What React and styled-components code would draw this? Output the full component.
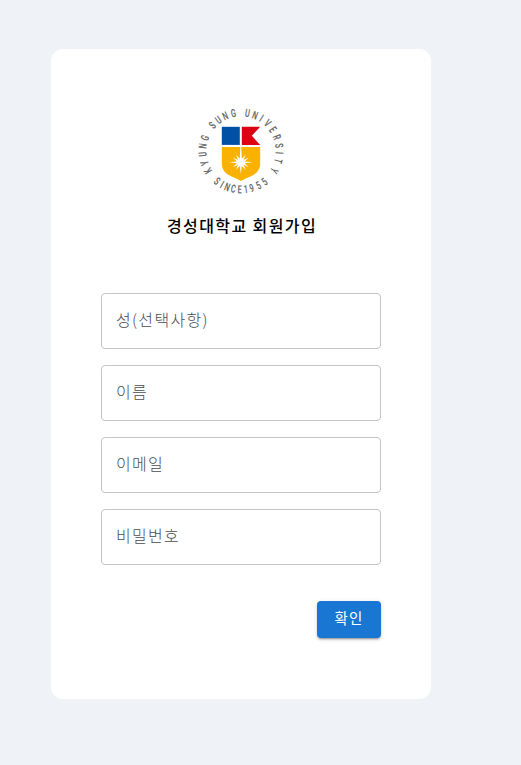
import React from "react";
import styled, { createGlobalStyle } from "styled-components";

const GlobalStyle = createGlobalStyle`
  * { box-sizing: border-box; }
  body {
    margin: 0;
    background: #eff3f8;
    font-family: "Noto Sans CJK KR", sans-serif;
  }
`;

const Page = styled.main`
  min-height: 765px;
  padding: 49px 0 0 51px;
  background: #eff3f8;
`;

const Card = styled.form`
  display: flex;
  flex-direction: column;
  width: 380px;
  height: 650px;
  padding: 58px 50px 60px;
  border-radius: 12px;
  background: #fff;
`;

const Crest = styled.svg`
  display: block;
  align-self: center;
  width: 88px;
  height: 88px;
`;

const Title = styled.h1`
  margin: 18px 0 0;
  padding-left: 2px;
  height: 24px;
  color: #000;
  font-size: 16px;
  font-weight: 500;
  line-height: 24px;
  letter-spacing: 1.4px;
  text-align: center;
  white-space: nowrap;
`;

const Fields = styled.div`
  display: flex;
  flex-direction: column;
  gap: 16px;
  margin-top: 56px;
`;

const Field = styled.label`
  display: flex;
  align-items: center;
  height: 56px;
  padding: 0 13px 3px 14px;
  border: 1px solid #c4c4c4;
  border-radius: 4px;
  color: #4c4c4c;
  font-size: 16px;
  font-weight: 300;
  line-height: 23px;
  letter-spacing: 1.3px;
`;

const SubmitButton = styled.button`
  align-self: flex-end;
  width: 64px;
  height: 37px;
  margin-top: 36px;
  padding: 0 0 3px;
  border: 0;
  border-radius: 4px;
  background: #1976d2;
  color: #fff;
  font: 400 14.5px/24px "Noto Sans CJK KR", sans-serif;
  letter-spacing: 1.2px;
  box-shadow: 0 3px 1px -2px rgba(0, 0, 0, 0.2), 0 2px 2px rgba(0, 0, 0, 0.14),
    0 1px 5px rgba(0, 0, 0, 0.12);
`;

const upperLetters = [
  ["K", 239], ["Y", 251.5], ["U", 265], ["N", 277.5], ["G", 290],
  ["S", 312], ["U", 324], ["N", 336], ["G", 348.5],
  ["U", 9.5], ["N", 21.5], ["I", 32], ["V", 43.5], ["E", 56], ["R", 69],
  ["S", 82], ["I", 93], ["T", 105], ["Y", 120.5],
];

const lowerLetters = [
  ["S", 38.5], ["I", 29.5], ["N", 21], ["C", 11.5], ["E", 2],
  ["1", -7], ["9", -16], ["5", -27], ["5", -37.5],
];

function Ring() {
  return (
    <g fill="#666" fontFamily="Roboto, sans-serif" fontSize="11.2" fontWeight="600" textAnchor="middle">
      {upperLetters.map(([letter, angle]) => (
        <text key={angle} transform={`rotate(${angle}) translate(0 -34.6) scale(.64 1)`}>{letter}</text>
      ))}
      {lowerLetters.map(([letter, angle]) => (
        <text key={angle} transform={`rotate(${angle}) translate(0 42.4) scale(.64 1)`}>{letter}</text>
      ))}
    </g>
  );
}

function Logo() {
  return (
    <Crest viewBox="-44 -44 88 88" role="img" aria-label="Kyung Sung University">
      <Ring />
      <path fill="#0050a5" d="M-19.2-24.2H-1.2V-6.1H-19.2Z" />
      <path fill="#dc0014" d="M.8-24.2H19.2L10.8-15.2L19.2-6.1H.8Z" />
      <path fill="#f9b200" d="M-19.2-3.9H19.2V12C19.2 18.500 16 22.500 10 25.200C6 26.800 3 28 0 30C-3 28-6 26.800-10 25.200C-16 22.500-19.200 18.500-19.200 12Z" />
      <path fill="#fff" d="M-.7-4H.3L.8 7.800L4.600 3.800L2.600 8.900L7.800 6.500L3.800 10.500L12 11.300L3.800 12.200L7.800 16.200L2.600 13.800L4.600 18.800L.8 15L-.2 23L-1.200 15L-5 18.800L-3 13.800L-8.200 16.200L-4.200 12.200L-12 11.300L-4.200 10.500L-8.200 6.500L-3 8.900L-5 3.800L-1.200 7.800Z" />
    </Crest>
  );
}

const fields = ["성(선택사항)", "이름", "이메일", "비밀번호"];

export default function App() {
  return (
    <>
      <GlobalStyle />
      <Page>
        <Card>
          <Logo />
          <Title>경성대학교 회원가입</Title>
          <Fields>
            {fields.map((label) => (
              <Field key={label}>{label}</Field>
            ))}
          </Fields>
          <SubmitButton type="button">확인</SubmitButton>
        </Card>
      </Page>
    </>
  );
}
